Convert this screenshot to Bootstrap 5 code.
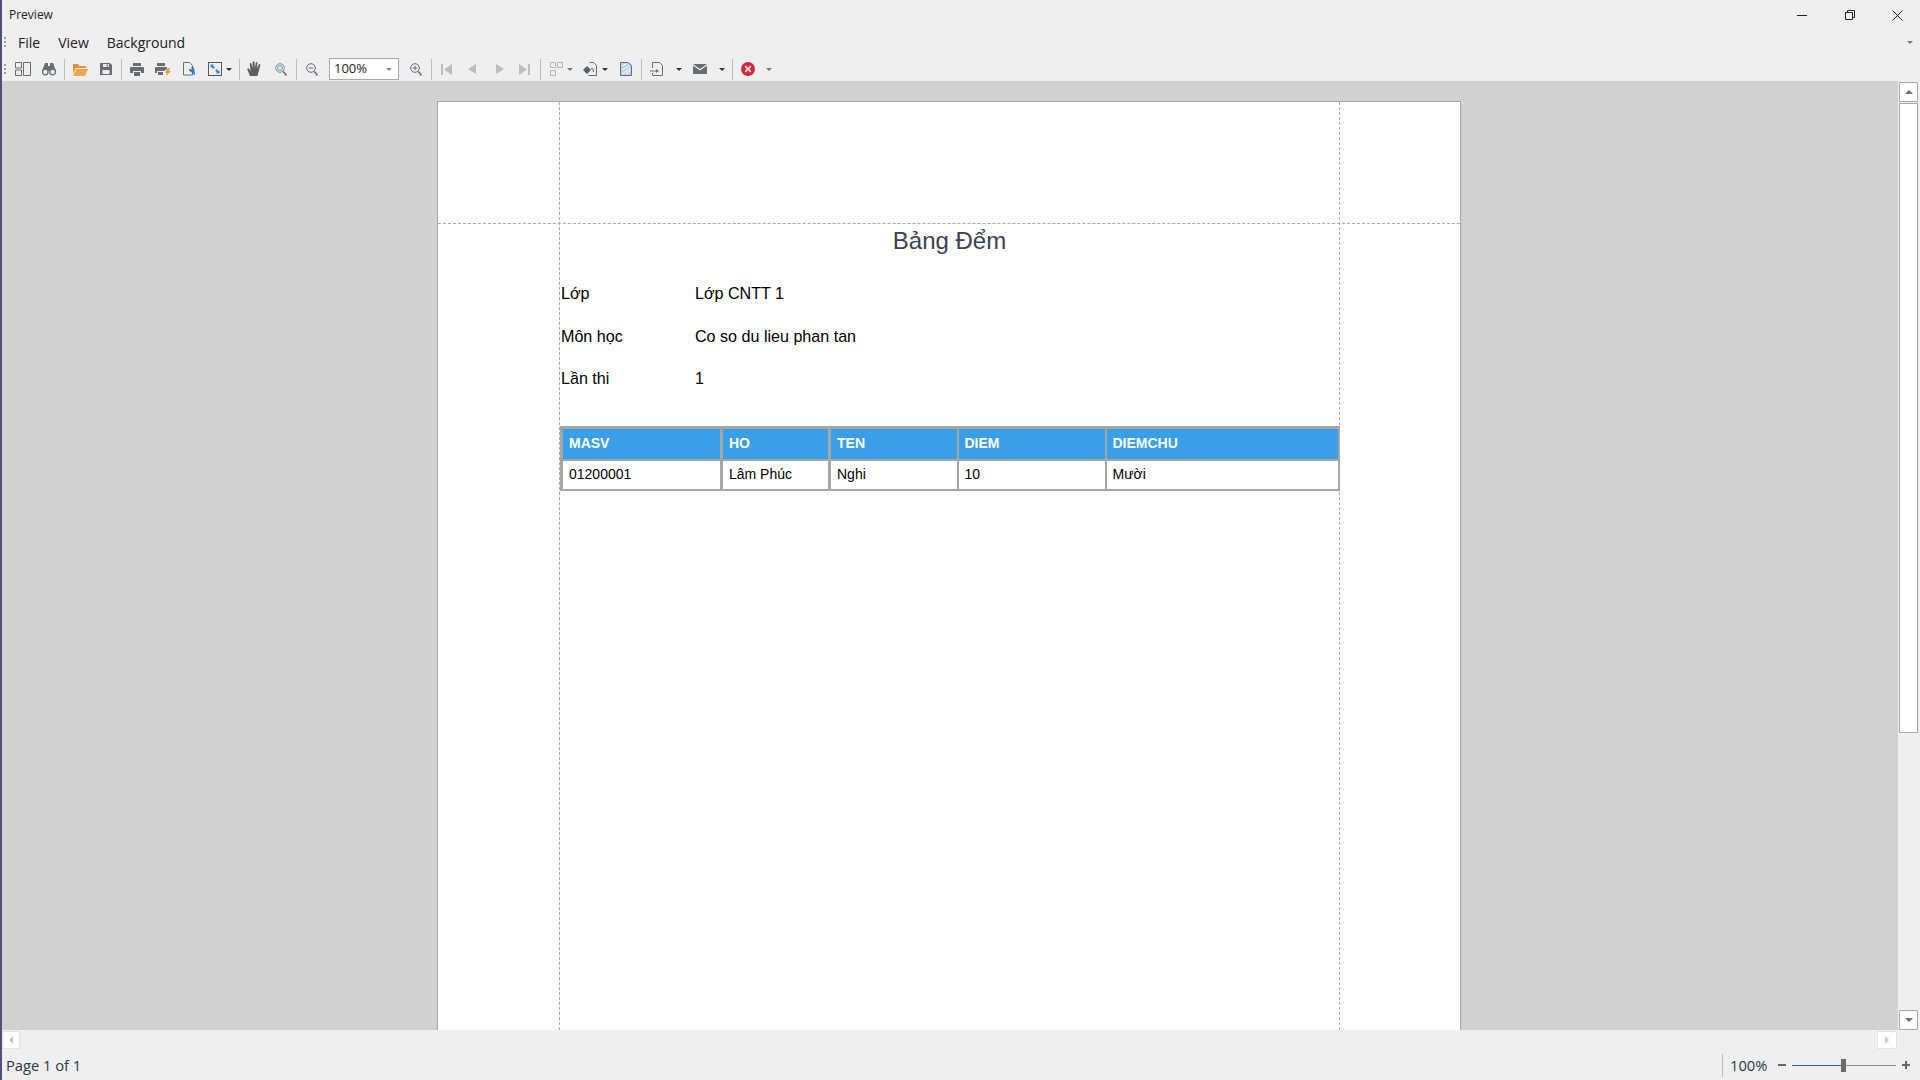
<!DOCTYPE html>
<html lang="vi">
<head>
<meta charset="utf-8">
<title>Preview</title>
<link href="https://cdn.jsdelivr.net/npm/bootstrap@5.3.0/dist/css/bootstrap.min.css" rel="stylesheet">
<style>
html,body{height:100%;margin:0;overflow:hidden;background:#efefef}
.app{height:1080px;border-left:2px solid #4f4f86;font-family:"Open Sans","Noto Sans",sans-serif;color:#222}
.titlebar{height:30px;font-size:12px;padding-left:7px;flex:none}
.winctl{margin-left:auto}
.wc-rest{margin-left:38px}
.wc-close{margin-left:37px;margin-right:17px}
.menubar{height:25px;font-size:14px;padding-left:2px;flex:none}
.grip{width:2px;height:11px;background:radial-gradient(circle at 1px 1px,#9a9a9a 1px,transparent 1px) 0 0/2px 4px;flex:none}
.menu-file{margin-left:12px}.menu-view{margin-left:18px}.menu-bg{margin-left:18px}
.menu-drop{margin-left:auto;margin-right:7px}
.toolbar{height:26px;padding-top:2px;flex:none}
.toolbar svg{flex:none;display:block}
.tsep{width:1px;height:21px;background:#bdbdbd;flex:none}
.caret-d{width:0;height:0;border-left:3px solid transparent;border-right:3px solid transparent;border-top:3px solid #333;flex:none}
.caret-g{border-top-color:#777}
.combo{width:70px;height:22px;background:#fff;border:1px solid #a9a9a9;font-size:13px;padding:0 4px;flex:none}
.combo .caret-d{margin-left:auto;margin-right:2px;border-top-color:#888}
.g2{margin-left:2px}.g4{margin-left:4px}.g5{margin-left:5px}.g7{margin-left:7px}.g8{margin-left:8px}.g9{margin-left:9px}.g10{margin-left:10px}.g11{margin-left:11px}.g12{margin-left:12px}.g13{margin-left:13px}.g15{margin-left:15px}.g16{margin-left:16px}.g20{margin-left:20px}
.workarea{height:949px;flex:none}
.viewer{width:1896px;background:#d1d1d1;padding:20px 0 0 435px;overflow:hidden;flex:none}
.sheet{position:relative;width:1024px;height:1300px;background:#fff;border:1px solid #a8a8a8;padding:122px 0 0 122px;font-family:"Liberation Sans",Arial,sans-serif;color:#000}
.guide-v{position:absolute;top:0;bottom:0;width:0;border-left:1px dashed #a9a9a9}
.gv1{left:121px}.gv2{left:901px}
.guide-h{position:absolute;left:0;right:0;top:121px;height:0;border-top:1px dashed #a9a9a9}
.sheet-body{width:779px;position:relative}
.rpt-title{height:34px;font-size:24px;line-height:34px;text-align:center;color:#3b4252}
.info{margin-top:14px}
.info-row{height:42.6px;font-size:16.1px}
.info-lbl{width:135px;padding-left:1px}
.rpt-table.table{width:777px;margin:26.45px 0 0;table-layout:fixed;border-collapse:collapse;font-size:14px;color:#000}
.rpt-table.table>thead>tr>th,.rpt-table.table>tbody>tr>td{border:2px solid #a6a6a6;padding:0 6px;vertical-align:middle;box-shadow:none}
.rpt-table.table>thead>tr>th{height:32px;background:#3a9fe6;color:#fff;font-weight:700;border-top-width:3px}
.rpt-table.table>tbody>tr>td{height:30px;background:#fff;color:#000}
.rpt-table.table>thead>tr>th:nth-child(-n+2),.rpt-table.table>tbody>tr>td:nth-child(-n+2){border-left-width:3px;border-right-width:3px}
.c1{width:160px}.c2{width:108px}.c3{width:128px}.c4{width:148px}.c5{width:233px}
.vscroll{width:22px;flex:none;padding:1px 2px 0 1px}
.sb-btn{background:#fff;border:1px solid #a9a9a9;flex:none}
.sb-v{height:20px;width:19px}
.sb-thumb{height:630px;width:19px;background:#fff;border:1px solid #a9a9a9;margin-top:1px;flex:none}
.sb-spacer{flex:1 1 auto}
.hscroll{height:20px;flex:none;padding-right:23px}
.sb-h{width:20px;height:18px;background:#fff;border:1px solid #e3e3e3;flex:none}
.sb-h-first{width:18px}
.tri-u{width:0;height:0;border-left:4px solid transparent;border-right:4px solid transparent;border-bottom:4px solid #6f6f6f}
.tri-d{width:0;height:0;border-left:4px solid transparent;border-right:4px solid transparent;border-top:4px solid #6f6f6f}
.tri-l{width:0;height:0;border-top:4px solid transparent;border-bottom:4px solid transparent;border-right:4px solid #c9c9c9}
.tri-r{width:0;height:0;border-top:4px solid transparent;border-bottom:4px solid transparent;border-left:4px solid #c9c9c9}
.statusbar{height:30px;flex:none;font-size:14.7px;padding-left:4px;color:#2a3a4e}
.st-right{margin-left:auto}
.st-sep{width:1px;height:23px;background:#bdbdbd}
.st-pct{margin-left:7px;width:37px;white-space:nowrap}
.st-minus{width:8px;height:2px;background:#666;margin-left:11px}
.slider{position:relative;width:104px;height:1px;background:#8d8d8d;margin-left:6px}
.slider-fill{position:absolute;left:0;top:0;height:1px;width:49px;background:#36619c}
.slider-thumb{position:absolute;left:49px;top:-6px;width:5px;height:13px;background:#6a6a6a}
.st-plus{margin-left:6px;margin-right:10px}
</style>
</head>
<body>
<div class="app d-flex flex-column">

  <div class="titlebar d-flex align-items-center">
    <span>Preview</span>
    <svg class="winctl" width="10" height="1" viewBox="0 0 10 1"><rect width="10" height="1" fill="#222"/></svg>
    <svg class="wc-rest" width="10" height="10" viewBox="0 0 10 10"><path d="M.5 2.500h7v7h-7zM2.500 2.500V.5h7v7h-2" fill="none" stroke="#222"/></svg>
    <svg class="wc-close" width="11" height="11" viewBox="0 0 11 11"><path d="M.5.500l10 10M10.500.500l-10 10" stroke="#222" fill="none"/></svg>
  </div>

  <div class="menubar d-flex align-items-center">
    <span class="grip"></span>
    <span class="menu-file">File</span>
    <span class="menu-view">View</span>
    <span class="menu-bg">Background</span>
    <span class="caret-d caret-g menu-drop"></span>
  </div>

  <div class="toolbar d-flex align-items-center">
    <span class="grip g2"></span>
    <svg class="g9" width="16" height="14" viewBox="0 0 16 14" fill="none" stroke="#6b6b76"><path d="M.5.500h6v5.500h-6zM.5 8h6v5.500h-6zM8.500.500h7v13h-7z"/></svg>
    <svg class="g11" width="14" height="14" viewBox="0 0 14 14" fill="#6b6b76"><path d="M3 1h3v3h2V1h3l3 8H0z"/><circle cx="3.300" cy="10" r="2.800" fill="#efefef" stroke="#6b6b76" stroke-width="1.300"/><circle cx="10.700" cy="10" r="2.800" fill="#efefef" stroke="#6b6b76" stroke-width="1.300"/></svg>
    <span class="tsep g8"></span>
    <svg class="g8" width="15" height="13" viewBox="0 0 15 13"><path d="M0 1h5l1.500 2H13v2H3L0 11z" fill="#e98f38"/><path d="M3.500 6H15l-3 7H0z" fill="#f3a352"/></svg>
    <svg class="g12" width="12" height="12" viewBox="0 0 12 12"><path d="M0 0h10l2 2v10H0z" fill="#6b6b76"/><path d="M3 1h6v3H3zM2.500 7h7v4h-7z" fill="#efefef"/><path d="M6.500 1.500h1.500v2H6.500z" fill="#6b6b76"/></svg>
    <span class="tsep g9"></span>
    <svg class="g8" width="14" height="13" viewBox="0 0 14 13" fill="#6b6b76"><path d="M3 0h8v3H3zM1 4h12a1 1 0 0 1 1 1v5h-3V8H3v2H0V5a1 1 0 0 1 1-1z"/><path d="M4 9h6v4H4z"/></svg>
    <svg class="g11" width="16" height="13" viewBox="0 0 16 13"><path d="M2 0h8v3H2zM1 4h10a1 1 0 0 1 1 1v1l-3 2H2v2H0V5a1 1 0 0 1 1-1zM3 9h5v3H3z" fill="#6b6b76"/><path d="M13 5l-3 5h2l-1 3 5-5h-2.500l1.500-3z" fill="#ee9336"/></svg>
    <svg class="g12" width="12" height="14" viewBox="0 0 12 14"><path d="M.5.500h6l3 3v9.500h-9z" fill="none" stroke="#6b6b76"/><path d="M11.500 13.500L7 9.500a2 2 0 0 1-1-3l1.500 1 1-1-1-1.500a2 2 0 0 1 3 1l.5 2.500z" fill="#2f7fd0" transform="translate(.5 0)"/></svg>
    <svg class="g13" width="14" height="14" viewBox="0 0 14 14"><rect x=".5" y=".5" width="13" height="13" fill="none" stroke="#55555f"/><path d="M2.500 2.500h3.500l-1 1 2 2-1.500 1.500-2-2-1 1zM11.500 11.500h-3.500l1-1-2-2 1.500-1.500 2 2 1-1z" fill="#2f86d6"/></svg>
    <span class="caret-d g4"></span>
    <span class="tsep g7"></span>
    <svg class="g7" width="16" height="16" viewBox="0 0 16 16" fill="#5f5f5f"><path d="M3 15L.3 8.500c-.5-1.200 1-1.800 1.700-.8L3.500 10 2.800 3c-.1-1.300 1.500-1.400 1.700-.2L5.500 7 5.700 1.200c0-1.400 1.800-1.400 1.800 0L7.800 7l1-5.200c.2-1.300 1.900-1 1.700.3L9.900 7.500l1.800-3.800c.5-1.100 2-.5 1.600.6L11.500 11 10.500 15z"/></svg>
    <svg class="g12" width="12" height="13" viewBox="0 0 12 13" fill="none"><circle cx="5" cy="5" r="4.300" stroke="#8a8a94"/><circle cx="5" cy="5" r="2.300" stroke="#7aa9d8" stroke-width="1.200"/><path d="M8.200 8.400l3.300 4" stroke="#6b6b76" stroke-width="1.500"/></svg>
    <span class="tsep g9"></span>
    <svg class="g9" width="12" height="13" viewBox="0 0 12 13" fill="none" stroke="#6b6b76"><circle cx="5" cy="5" r="4.300"/><path d="M2.800 5h4.400"/><path d="M8.200 8.400l3.300 4" stroke-width="1.500"/></svg>
    <div class="combo g11 d-flex align-items-center"><span>100%</span><span class="caret-d"></span></div>
    <svg class="g11" width="12" height="13" viewBox="0 0 12 13" fill="none" stroke="#6b6b76"><circle cx="5" cy="5" r="4.300"/><path d="M2.800 5h4.400M5 2.800v4.400"/><path d="M8.200 8.400l3.300 4" stroke-width="1.500"/></svg>
    <span class="tsep g9"></span>
    <svg class="g9" width="11" height="11" viewBox="0 0 11 11" fill="#bdbdbd"><path d="M0 0h2v11H0zM11 0v11L3 5.500z"/></svg>
    <svg class="g16" width="8" height="10" viewBox="0 0 8 10" fill="#bdbdbd"><path d="M8 0v10L0 5z"/></svg>
    <svg class="g20" width="8" height="10" viewBox="0 0 8 10" fill="#bdbdbd"><path d="M0 0v10l8-5z"/></svg>
    <svg class="g15" width="11" height="11" viewBox="0 0 11 11" fill="#bdbdbd"><path d="M9 0h2v11H9zM0 0v11l8-5.500z"/></svg>
    <span class="tsep g10"></span>
    <svg class="g9" width="13" height="14" viewBox="0 0 13 14" fill="none" stroke="#b5b5b5"><path d="M.5.500h5v5h-5zM7.500.500h5v5h-5zM.5 8.500h5v5h-5z"/></svg>
    <span class="caret-d caret-g g4"></span>
    <svg class="g10" width="14" height="14" viewBox="0 0 14 14"><path d="M6.500.500h4l3 3v10h-8" fill="none" stroke="#6b6b76"/><path d="M4 4l4 4-4 4-4-4z" fill="#5b5b66"/><path d="M8 6a3 3 0 0 1 3 3v1h-1V9a2 2 0 0 0-2-2z" fill="#2f7fd0"/></svg>
    <span class="caret-d g5"></span>
    <svg class="g12" width="12" height="14" viewBox="0 0 12 14"><path d="M.5.500h8l3 3v10H.5z" fill="#b9d3ee" stroke="#6b6b76"/><path d="M2 4l4-2M2 8l7-4M2 12l8-5M6 12l4-3" stroke="#fff" fill="none"/></svg>
    <span class="tsep g9"></span>
    <svg class="g8" width="13" height="14" viewBox="0 0 13 14"><path d="M2.500 6V.5h7l3 3v10h-10V11" fill="none" stroke="#6b6b76"/><path d="M0 8.500h6V7l3 2-3 2V9.500H0z" fill="#2f9e44"/></svg>
    <span class="caret-d g13"></span>
    <svg class="g11" width="14" height="10" viewBox="0 0 14 10"><path d="M0 0h14L7 5z" fill="#6b6b76"/><path d="M0 1.500V10h14V1.500L7 6.500z" fill="#6b6b76"/></svg>
    <span class="caret-d g12"></span>
    <span class="tsep g7"></span>
    <svg class="g8" width="14" height="14" viewBox="0 0 14 14"><circle cx="7" cy="7" r="7" fill="#d2283f"/><path d="M4.200 4.200l5.600 5.600M9.800 4.200l-5.600 5.600" stroke="#f4d9dc" stroke-width="1.800"/></svg>
    <span class="caret-d caret-g g11"></span>
  </div>

  <div class="workarea d-flex">
    <div class="viewer">
      <div class="sheet">
        <span class="guide-v gv1"></span>
        <span class="guide-v gv2"></span>
        <span class="guide-h"></span>
        <div class="sheet-body">
          <div class="rpt-title">Bảng Đểm</div>
          <div class="info">
            <div class="info-row d-flex align-items-center"><span class="info-lbl">Lớp</span><span>Lớp CNTT 1</span></div>
            <div class="info-row d-flex align-items-center"><span class="info-lbl">Môn học</span><span>Co so du lieu phan tan</span></div>
            <div class="info-row d-flex align-items-center"><span class="info-lbl">Lần thi</span><span>1</span></div>
          </div>
          <table class="table rpt-table">
            <colgroup><col class="c1"><col class="c2"><col class="c3"><col class="c4"><col class="c5"></colgroup>
            <thead><tr><th>MASV</th><th>HO</th><th>TEN</th><th>DIEM</th><th>DIEMCHU</th></tr></thead>
            <tbody><tr><td>01200001</td><td>Lâm Phúc</td><td>Nghi</td><td>10</td><td>Mười</td></tr></tbody>
          </table>
        </div>
      </div>
    </div>
    <div class="vscroll d-flex flex-column">
      <div class="sb-btn sb-v d-flex align-items-center justify-content-center"><span class="tri-u"></span></div>
      <div class="sb-thumb"></div>
      <div class="sb-spacer"></div>
      <div class="sb-btn sb-v d-flex align-items-center justify-content-center"><span class="tri-d"></span></div>
    </div>
  </div>

  <div class="hscroll d-flex align-items-center justify-content-between">
    <div class="sb-h sb-h-first d-flex align-items-center justify-content-center"><span class="tri-l"></span></div>
    <div class="sb-h d-flex align-items-center justify-content-center"><span class="tri-r"></span></div>
  </div>

  <div class="statusbar d-flex align-items-center">
    <span>Page 1 of 1</span>
    <div class="st-right d-flex align-items-center">
      <span class="st-sep"></span>
      <span class="st-pct">100%</span>
      <span class="st-minus"></span>
      <div class="slider"><span class="slider-fill"></span><span class="slider-thumb"></span></div>
      <svg class="st-plus" width="8" height="8" viewBox="0 0 8 8"><path d="M0 3h8v2H0zM3 0h2v8H3z" fill="#666"/></svg>
    </div>
  </div>

</div>
</body>
</html>
